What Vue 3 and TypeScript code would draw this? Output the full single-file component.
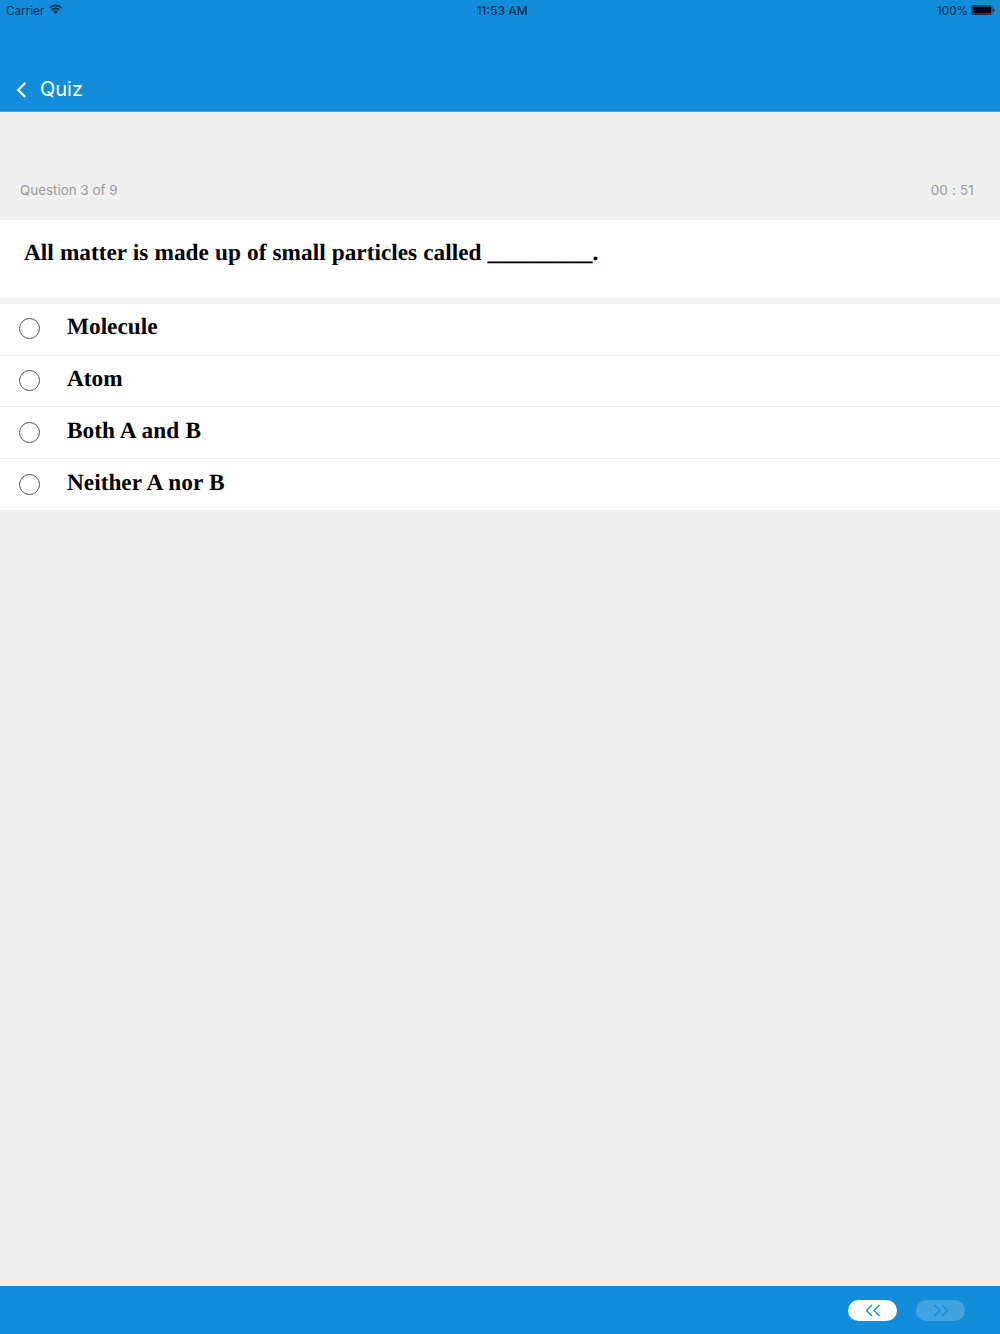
<script setup lang="ts">
const options = ['Molecule', 'Atom', 'Both A and B', 'Neither A nor B']
</script>

<template>
  <div class="page">
    <header class="header">
      <div class="status">
        <div class="status-left">
          <span class="status-text">Carrier</span>
          <svg class="wifi" width="13" height="10" viewBox="0 0 13 10">
            <path d="M0 3.2 A9.2 9.2 0 0 1 13 3.2 L11.8 4.5 A7.5 7.5 0 0 0 1.2 4.5 Z" fill="#0b2f4c" />
            <path d="M2.1 5.3 A6.2 6.2 0 0 1 10.9 5.3 L9.7 6.6 A4.5 4.5 0 0 0 3.3 6.6 Z" fill="#0b2f4c" />
            <path d="M4.2 7.4 A3.2 3.2 0 0 1 8.8 7.4 L6.5 9.9 Z" fill="#0b2f4c" />
          </svg>
        </div>
        <span class="status-time">11:53 AM</span>
        <div class="status-right">
          <span class="status-text">100%</span>
          <svg width="24" height="10" viewBox="0 0 24 10">
            <rect x="0.5" y="0.5" width="20.5" height="9" rx="2" fill="none" stroke="#0b2f4c" />
            <rect x="1.5" y="1.5" width="18.5" height="7" rx="1" fill="#000" />
            <path d="M22 3.3 C23 3.5 23.5 4 23.5 5 C23.5 6 23 6.5 22 6.7 Z" fill="#0b2f4c" />
          </svg>
        </div>
      </div>
      <div class="nav">
        <svg class="back" width="11" height="16" viewBox="0 0 11 16">
          <path d="M9.2 1 L2.2 8 L9.2 15" fill="none" stroke="#fff" stroke-width="2.2" />
        </svg>
        <span class="nav-title">Quiz</span>
      </div>
    </header>

    <div class="meta">
      <span>Question 3 of 9</span>
      <span>00 : 51</span>
    </div>

    <div class="question">All matter is made up of small particles called _________.</div>

    <ul class="options">
      <li v-for="opt in options" :key="opt" class="option">
        <span class="radio"></span>
        <span class="label">{{ opt }}</span>
      </li>
    </ul>

    <div class="spacer"></div>

    <footer class="footer">
      <button class="pill">
        <svg width="16" height="13" viewBox="0 0 16 13">
          <path d="M7 1 L1.5 6.5 L7 12 M14.5 1 L9 6.5 L14.5 12" fill="none" stroke="#128dd9" stroke-width="1.4" />
        </svg>
      </button>
      <button class="pill disabled">
        <svg width="16" height="13" viewBox="0 0 16 13">
          <path d="M1.5 1 L7 6.5 L1.5 12 M9 1 L14.5 6.5 L9 12" fill="none" stroke="#128dd9" stroke-width="1.4" />
        </svg>
      </button>
    </footer>
  </div>
</template>

<style>
html, body {
  margin: 0;
  background: #f0f0f0;
}
</style>

<style scoped>
.page {
  width: 1000px;
  height: 1334px;
  display: flex;
  flex-direction: column;
  background: #f0f0f0;
  font-family: Inter, "Liberation Sans", sans-serif;
}
.header {
  height: 112px;
  box-sizing: border-box;
  background: #128dd9;
  display: flex;
  flex-direction: column;
  border-bottom: 1px solid #45a5e0;
}
.status {
  height: 20px;
  padding: 0 5px 0 6px;
  display: grid;
  grid-template-columns: 1fr auto 1fr;
  align-items: center;
  font-size: 11.7px;
  color: #0b2f4c;
}
.status-text {
  padding-top: 2px;
}
.status-left {
  display: flex;
  align-items: center;
  gap: 5px;
}
.wifi {
  margin-top: -2px;
}
.status-time {
  font-size: 12px;
  font-weight: 500;
  margin-left: 3px;
}
.status-right {
  display: flex;
  justify-content: flex-end;
  align-items: center;
  gap: 3px;
}
.nav {
  margin-top: auto;
  height: 46px;
  padding-left: 16px;
  display: flex;
  align-items: center;
  gap: 13px;
  color: #fff;
}
.back {
  margin-top: 3px;
}
.nav-title {
  font-size: 20px;
  padding-top: 2px;
}
.meta {
  height: 108px;
  box-sizing: border-box;
  padding: 0 26px 22px 20px;
  display: flex;
  justify-content: space-between;
  align-items: flex-end;
  font-size: 13.4px;
  color: #999;
}
.meta span:last-child {
  letter-spacing: 0.2px;
}
.question {
  height: 78px;
  box-sizing: border-box;
  padding: 17px 24px 0;
  background: #fff;
  font-family: "Liberation Serif", serif;
  font-weight: 700;
  font-size: 23.3px;
  line-height: 32px;
  word-spacing: 0.3px;
  text-rendering: geometricPrecision;
  color: #000;
}
.options {
  list-style: none;
  margin: 6px 0 0;
  padding: 0;
}
.option {
  height: 51.67px;
  box-sizing: border-box;
  background: #fff;
  border-bottom: 1px solid #eee;
  padding-left: 19px;
  display: flex;
  align-items: flex-start;
}
.radio {
  width: 21px;
  height: 21px;
  box-sizing: border-box;
  border: 1px solid #555;
  border-radius: 50%;
  margin-top: 14.4px;
}
.label {
  margin-left: 27px;
  margin-top: 7.4px;
  font-family: "Liberation Serif", serif;
  font-weight: 700;
  font-size: 23.3px;
  line-height: 32px;
  word-spacing: 0.4px;
  text-rendering: geometricPrecision;
  color: #000;
}
.option:last-child .radio {
  margin-top: 15px;
}
.option:last-child .label {
  margin-top: 8px;
}
.spacer {
  flex: 1;
}
.footer {
  height: 48px;
  background: #128dd9;
  display: flex;
  justify-content: flex-end;
  align-items: center;
  gap: 19px;
  padding-right: 35px;
}
.pill {
  width: 49px;
  height: 21px;
  border: 0;
  padding: 0;
  border-radius: 11px;
  background: #fff;
  display: flex;
  align-items: center;
  justify-content: center;
}
.pill.disabled {
  background: rgba(255, 255, 255, 0.2);
}
</style>
